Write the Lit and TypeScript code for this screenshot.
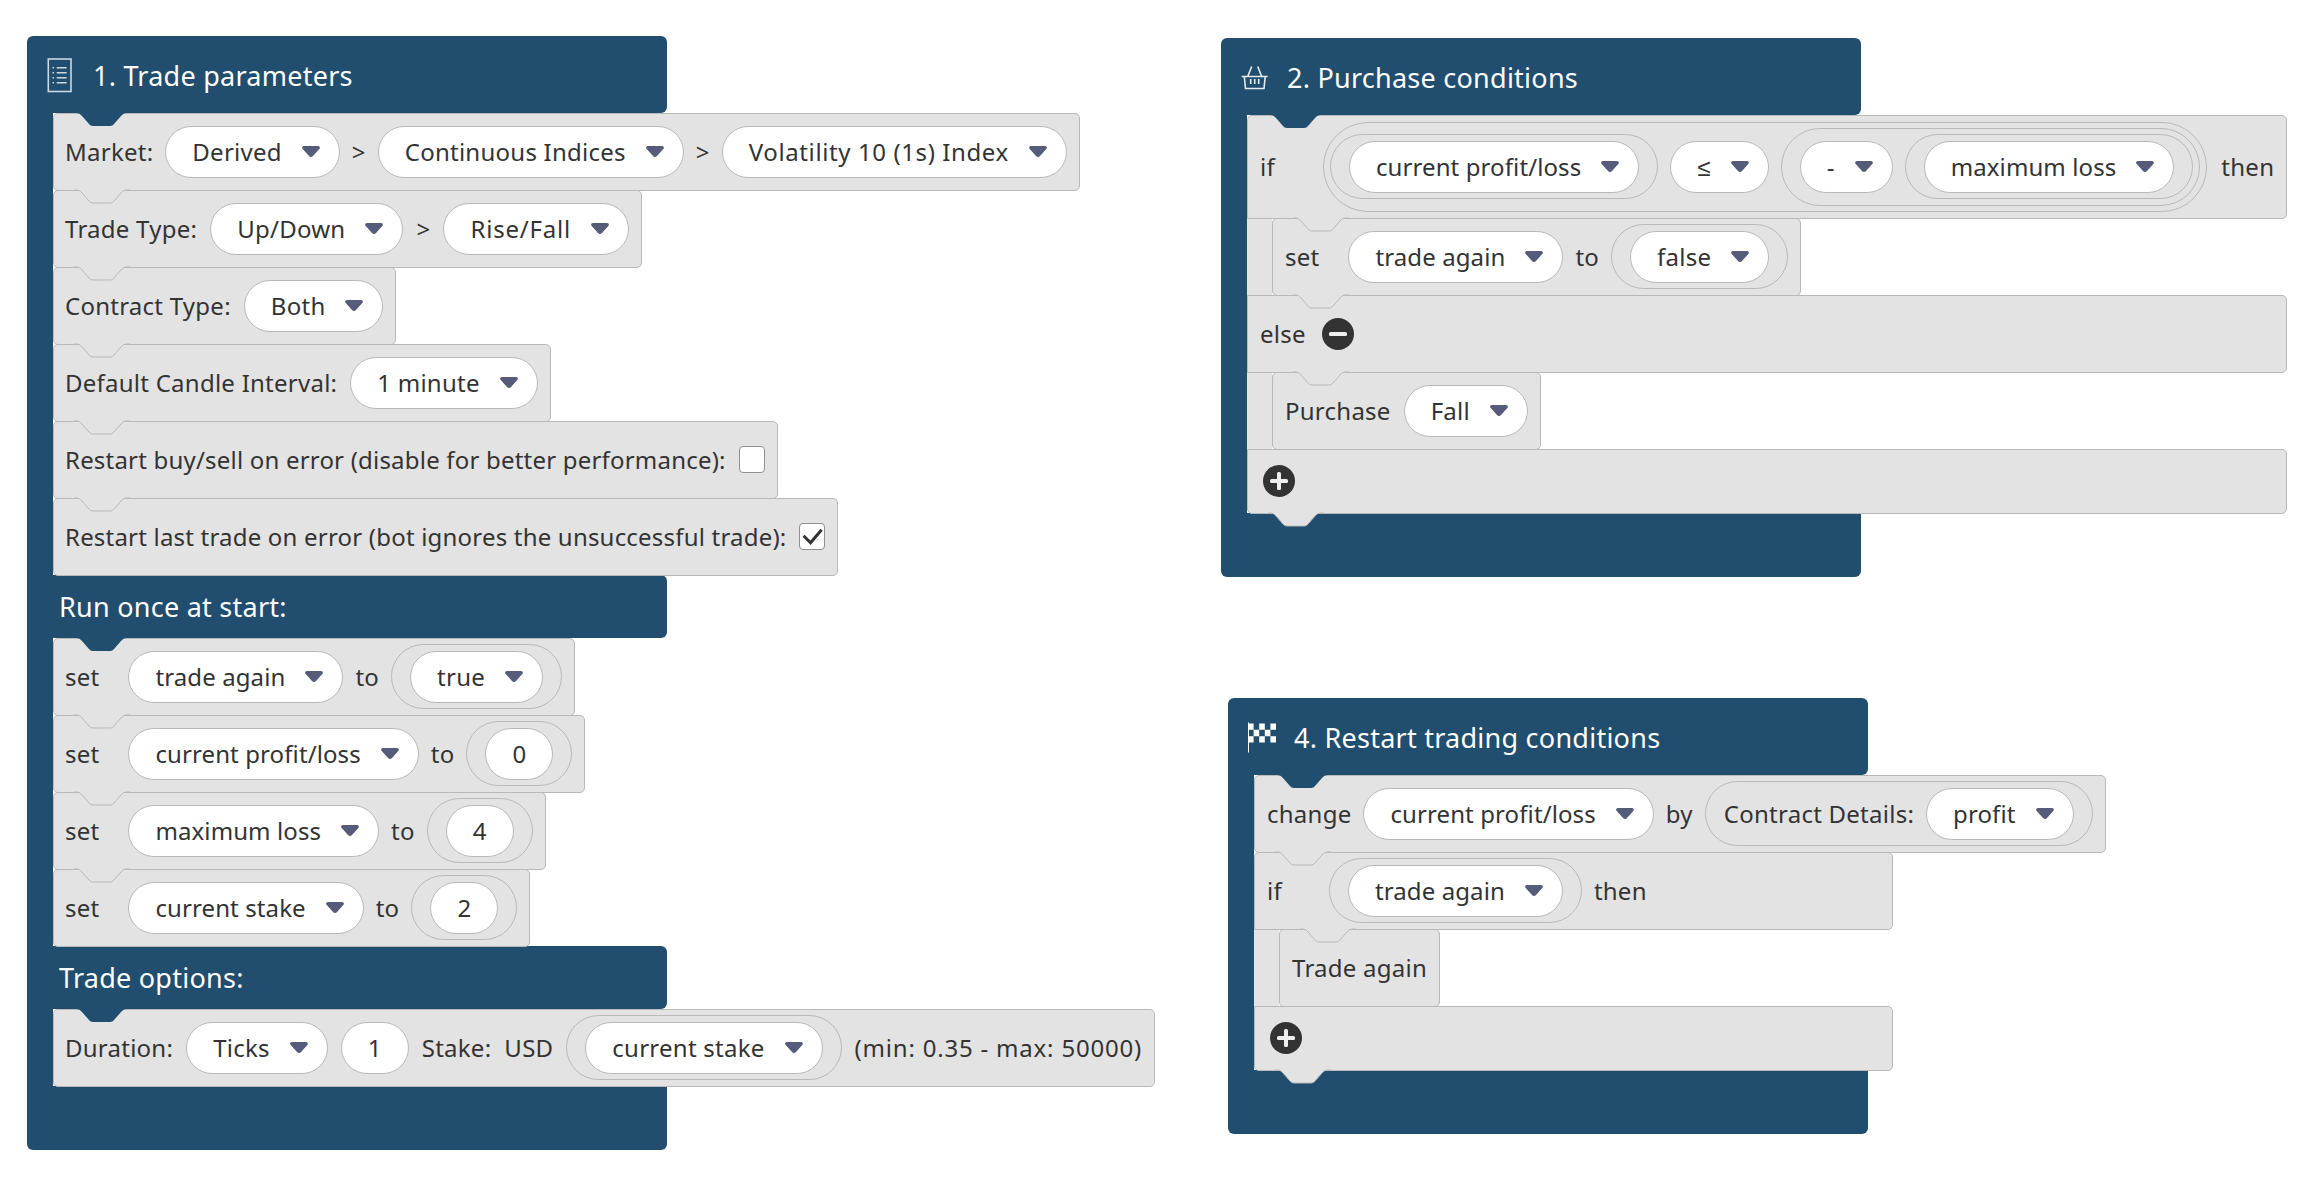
import { LitElement, html, css } from 'lit';
import { customElement } from 'lit/decorators.js';

const notchPath = 'M0 1 H2 C5 1 6 2 8 4 L15 12 C16 13 17 14 19 14 H36 C38 14 39 13 40 12 L47 4 C49 2 50 1 53 1 H56';

// checker cells of the flag icon, holes punched out of the white rect
const flagCells = () => {
  let d = 'M2 3.500 H30 V22.500 H2Z';
  for (let r = 0; r < 3; r++) {
    for (let c = 0; c < 5; c++) {
      if ((r + c) % 2 === 1) {
        const x = 2 + c * 5.6;
        const y = 3.5 + r * 6.33;
        d += ` M${x} ${y} h5.6 v6.33 h-5.6Z`;
      }
    }
  }
  return d;
};

@customElement('app-root')
export class AppRoot extends LitElement {
  static styles = css`
    :host {
      display: block;
      position: relative;
      width: 2318px;
      height: 1178px;
      background: #fff;
      overflow: hidden;
      font-family: 'Noto Sans', sans-serif;
      font-size: 24px;
      letter-spacing: 0.25px;
      color: #333;
    }
    .panel { position: absolute; width: 640px; white-space: nowrap; }
    .p1 { left: 27px; top: 36px; }
    .p2 { left: 1221px; top: 38px; }
    .p4 { left: 1228px; top: 698px; }

    .hat {
      height: 77px;
      background: #214e6e;
      border-radius: 6px 6px 6px 0;
      color: #fff;
      font-size: 27px;
      display: flex;
      align-items: center;
      gap: 20px;
      padding: 1px 0 0 18px;
      box-sizing: border-box;
    }
    .hat svg { width: 28px; height: 34px; flex: none; overflow: visible; }
    .band {
      box-sizing: border-box;
      height: 63px;
      background: #214e6e;
      border-radius: 0 6px 6px 0;
      color: #fff;
      font-size: 27px;
      display: flex;
      align-items: center;
      padding-left: 32px;
    }
    .body { border-left: 26px solid #214e6e; }
    .foot { height: 64px; background: #214e6e; border-radius: 0 0 6px 6px; }

    .row {
      position: relative;
      box-sizing: border-box;
      height: 78px;
      margin-bottom: -1px;
      width: fit-content;
      display: flex;
      align-items: center;
      gap: 13px;
      padding: 0 12px 1px 11px;
      background: #e3e3e3;
      border: 1px solid #b9b9b9;
      border-radius: 5px;
    }
    .p2 .row, .p4 .row { padding-left: 12px; }
    .close { gap: 12px; }
    .tall { height: 104px; }
    .short { height: 65px; border-top-left-radius: 0; }
    .open-bottom { border-bottom-left-radius: 0; }
    .open-top { border-top-left-radius: 0; }
    .over { z-index: 1; }
    .notch {
      position: absolute;
      left: 20px;
      top: -2px;
      width: 56px;
      height: 16px;
      fill: #e3e3e3;
      stroke: #b9b9b9;
    }
    .notch.navy { fill: #214e6e; stroke: none; }
    .tab {
      position: absolute;
      left: 20px;
      bottom: -15px;
      width: 56px;
      height: 16px;
      fill: #e3e3e3;
      stroke: #b9b9b9;
    }
    .nest { border-left: 25px solid #e3e3e3; }
    .wide-2 { width: 1040px; }
    .wide-4 { width: 639px; }

    .set { margin-right: 17px; }
    .if { margin-right: 35px; }
    .then { margin-left: 1px; }
    .tight { letter-spacing: 0.1px; }
    .label { letter-spacing: 0.2px; }
    .digits { letter-spacing: 0.6px; }
    .digits-more { letter-spacing: 0.8px; }

    .pill {
      display: inline-flex;
      align-items: center;
      gap: 20px;
      box-sizing: border-box;
      height: 52px;
      padding: 0 19px 1px 26px;
      background: #fff;
      border: 1px solid #b9b9b9;
      border-radius: 26px;
    }
    .num { padding: 0 26px 1px; }
    .ring {
      display: inline-flex;
      align-items: center;
      gap: 12px;
      box-sizing: border-box;
      height: 65px;
      padding: 0 18px;
      border: 1px solid #b9b9b9;
      border-radius: 33px;
    }
    .ring-outer { height: 90px; padding: 0 6px; border-radius: 45px; }
    .ring-mid { height: 78px; padding: 0 6px 0 18px; border-radius: 39px; }
    .arrow { width: 18px; height: 11px; fill: #565b7a; flex: none; }
    .box {
      box-sizing: border-box;
      width: 26px;
      height: 27px;
      background: #fff;
      border: 1.5px solid #8f8f8f;
      border-radius: 4px;
      display: inline-flex;
    }
    .box svg { width: 100%; height: 100%; fill: none; stroke: #333; stroke-width: 3; }
    .btn { width: 32px; height: 32px; flex: none; margin-left: 3px; }
  `;

  arrow() {
    return html`<svg class="arrow" viewBox="0 0 18 11"><path d="M2 0 H16 C17.600 0 18.400 1.500 17.500 2.700 L11 10 C10 11.200 8 11.200 7 10 L.5 2.700 C-.4 1.500 .4 0 2 0Z"/></svg>`;
  }

  drop(text: string, cls = '') {
    return html`<span class="pill"><span class=${cls}>${text}</span>${this.arrow()}</span>`;
  }

  num(text: string) {
    return html`<span class="pill num">${text}</span>`;
  }

  notch(navy = false) {
    return html`<svg class="notch ${navy ? 'navy' : ''}" viewBox="0 0 56 16"><path d=${notchPath}/></svg>`;
  }

  tab() {
    return html`<svg class="tab" viewBox="0 0 56 16"><path d=${notchPath}/></svg>`;
  }

  plusButton() {
    return html`<svg class="btn" viewBox="0 0 32 32"><circle cx="16" cy="16" r="16" fill="#333"/><rect x="7" y="14" width="18" height="4" rx="1.500" fill="#eee"/><rect x="14" y="7" width="4" height="18" rx="1.500" fill="#eee"/></svg>`;
  }

  setRow(name: string, value: unknown, navy = false) {
    return html`<div class="row close">${this.notch(navy)}<span class="set">set</span>${this.drop(name, 'tight')}<span>to</span>
      <span class="ring">${value}</span></div>`;
  }

  renderTradeParameters() {
    return html`<section class="panel p1">
      <header class="hat">
        <svg viewBox="0 0 28 34" fill="none" stroke="#ccd8e0" stroke-width="1.6">
          <rect x="3.300" y="1" width="22.700" height="32.500"/>
          <path d="M11.700 9.800 H21.700 M11.700 14.800 H21.700 M11.700 19.800 H21.700 M11.700 24.800 H21.700 M7.500 9.800 H9 M7.500 14.800 H9 M7.500 19.800 H9 M7.500 24.800 H9"/>
        </svg>
        1. Trade parameters
      </header>
      <div class="body">
        <div class="row close">${this.notch(true)}<span>Market:</span>${this.drop('Derived')}<span>&gt;</span>${this.drop('Continuous Indices')}<span>&gt;</span>${this.drop('Volatility 10 (1s) Index', 'digits')}</div>
        <div class="row">${this.notch()}<span>Trade Type:</span>${this.drop('Up/Down')}<span>&gt;</span>${this.drop('Rise/Fall', 'digits-more')}</div>
        <div class="row">${this.notch()}<span>Contract Type:</span>${this.drop('Both')}</div>
        <div class="row">${this.notch()}<span>Default Candle Interval:</span>${this.drop('1 minute')}</div>
        <div class="row">${this.notch()}<span class="label">Restart buy/sell on error (disable for better performance):</span><span class="box"></span></div>
        <div class="row">${this.notch()}<span class="label">Restart last trade on error (bot ignores the unsuccessful trade):</span>
          <span class="box"><svg viewBox="0 0 24 24"><path d="M3.600 11.300 L10.600 18.200 L21.600 5.300"/></svg></span></div>
      </div>
      <div class="band">Run once at start:</div>
      <div class="body">
        ${this.setRow('trade again', this.drop('true'), true)}
        ${this.setRow('current profit/loss', this.num('0'))}
        ${this.setRow('maximum loss', this.num('4'))}
        ${this.setRow('current stake', this.num('2'))}
      </div>
      <div class="band">Trade options:</div>
      <div class="body">
        <div class="row">${this.notch(true)}<span>Duration:</span>${this.drop('Ticks')}${this.num('1')}<span>Stake:</span><span>USD</span>
          <span class="ring">${this.drop('current stake')}</span><span class="digits-more">(min: 0.35 - max: 50000)</span></div>
      </div>
      <div class="foot"></div>
    </section>`;
  }

  renderPurchase() {
    return html`<section class="panel p2">
      <header class="hat">
        <svg viewBox="0 0 28 34" fill="none" stroke="#e4ecf1" stroke-width="1.600">
          <path d="M2.700 16.500 H28.700 M5.300 16.500 L6.500 28.500 H25 L26.200 16.500 M8.700 16.500 L12.700 6.500 M22.700 16.500 L18.700 6.500 M11.700 19 V24 M15.700 19 V24 M19.700 19 V24"/>
        </svg>
        2. Purchase conditions
      </header>
      <div class="body">
        <div class="row tall wide-2 open-bottom">${this.notch(true)}<span class="if">if</span>
          <span class="ring ring-outer">
            <span class="ring">${this.drop('current profit/loss', 'tight')}</span>
            ${this.drop('≤')}
            <span class="ring ring-mid">${this.drop('-')}<span class="ring">${this.drop('maximum loss', 'tight')}</span></span>
          </span>
          <span class="then">then</span></div>
        <div class="nest"><div class="row close over">${this.notch()}<span class="set">set</span>${this.drop('trade again', 'tight')}<span>to</span><span class="ring">${this.drop('false')}</span>${this.tab()}</div></div>
        <div class="row wide-2 open-top open-bottom"><span>else</span>
          <svg class="btn" viewBox="0 0 32 32"><circle cx="16" cy="16" r="16" fill="#333"/><rect x="7" y="14" width="18" height="4" rx="1.500" fill="#eee"/></svg></div>
        <div class="nest"><div class="row">${this.notch()}<span>Purchase</span>${this.drop('Fall')}</div></div>
        <div class="row short wide-2">${this.plusButton()}${this.tab()}</div>
      </div>
      <div class="foot"></div>
    </section>`;
  }

  renderRestart() {
    return html`<section class="panel p4">
      <header class="hat">
        <svg viewBox="0 0 28 34" fill="#fff">
          <path d="M2 2.500 V32.500 H3 V2.500Z"/>
          <path fill-rule="evenodd" d=${flagCells()}/>
        </svg>
        4. Restart trading conditions
      </header>
      <div class="body">
        <div class="row close">${this.notch(true)}<span>change</span>${this.drop('current profit/loss', 'tight')}<span>by</span>
          <span class="ring"><span>Contract Details:</span>${this.drop('profit', 'tight')}</span></div>
        <div class="row close wide-4 open-bottom">${this.notch()}<span class="if">if</span><span class="ring">${this.drop('trade again', 'tight')}</span><span>then</span></div>
        <div class="nest"><div class="row">${this.notch()}<span>Trade again</span></div></div>
        <div class="row short wide-4">${this.plusButton()}${this.tab()}</div>
      </div>
      <div class="foot"></div>
    </section>`;
  }

  render() {
    return html`${this.renderTradeParameters()}${this.renderPurchase()}${this.renderRestart()}`;
  }
}
